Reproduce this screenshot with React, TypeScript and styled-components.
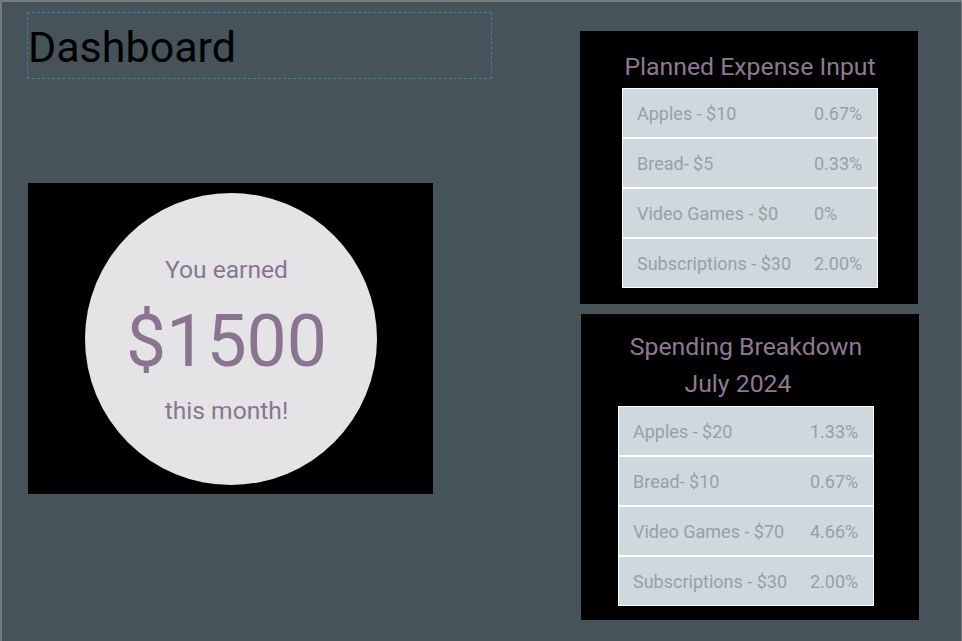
import React from "react";
import styled, { createGlobalStyle } from "styled-components";

const GlobalStyle = createGlobalStyle`
  html, body {
    margin: 0;
    padding: 0;
    background: #747c80;
    font-family: Roboto, "Liberation Sans", Arial, sans-serif;
  }
  #root {
    margin: 2px 1px 0 2px;
  }
`;

const Page = styled.div`
  min-height: calc(100vh - 2px);
  background: #465358;
  display: flex;
  align-items: flex-start;
  padding-left: 25px;
  box-sizing: border-box;
`;

const LeftColumn = styled.div`
  width: 465px;
  padding-top: 10px;
  display: flex;
  flex-direction: column;
`;

const RightColumn = styled.div`
  margin-left: 88px;
  padding-top: 29px;
  display: flex;
  flex-direction: column;
  gap: 10px;
`;

const TitleBox = styled.div`
  height: 67px;
  box-sizing: border-box;
  border: 1px dashed #3f7fa3;
  padding: 9px 0 0 0;
`;

const Title = styled.h1`
  margin: 0;
  font-size: 43px;
  font-weight: 400;
  line-height: normal;
  color: #000;
`;

const EarnedCard = styled.div`
  margin: 104px 0 0 1px;
  width: 405px;
  height: 311px;
  background: #000;
  display: flex;
  align-items: center;
  justify-content: center;
`;

const Circle = styled.div`
  width: 292px;
  height: 292px;
  border-radius: 50%;
  background: #e4e4e7;
  display: flex;
  flex-direction: column;
  align-items: center;
  justify-content: center;
  padding: 3px 8px 0 0;
  box-sizing: border-box;
  color: #8a7590;
`;

const EarnedLine = styled.div<{ $gap?: number }>`
  font-size: 24.6px;
  line-height: 28px;
  margin-top: ${(p) => p.$gap ?? 0}px;
`;

const Amount = styled.div`
  font-size: 71.5px;
  line-height: 82px;
  margin-top: 17px;
`;

const Card = styled.div<{ $top: number; $bottom: number; $nudge: number }>`
  width: 338px;
  box-sizing: border-box;
  background: #000;
  margin-left: ${(p) => p.$nudge}px;
  padding: ${(p) => p.$top}px 0 ${(p) => p.$bottom}px;
  display: flex;
  flex-direction: column;
`;

const CardInner = styled.div<{ $offset: number }>`
  width: 256px;
  margin-left: ${(p) => p.$offset}px;
  display: flex;
  flex-direction: column;
  align-items: center;
`;

const CardTitle = styled.h2<{ $gap: number }>`
  margin: 0 0 ${(p) => p.$gap}px;
  font-size: 24.8px;
  font-weight: 400;
  line-height: 37px;
  color: #8d7a91;
  text-align: center;
  white-space: nowrap;
`;

const TitleLine = styled.span<{ $pad?: number }>`
  display: block;
  padding-right: ${(p) => p.$pad ?? 0}px;
`;

const Table = styled.div`
  width: 256px;
  display: flex;
  flex-direction: column;
`;

const Row = styled.div`
  height: 50px;
  box-sizing: border-box;
  border: 1px solid #ffffff;
  background: #cfd8dc;
  display: grid;
  grid-template-columns: 1fr 50px;
  align-items: center;
  padding: 1px 13px 0 14px;
  font-size: 18px;
  color: #9a9fa4;
  white-space: nowrap;
`;

const Cell = styled.span``;

type Item = { label: string; pct: string };

const planned: Item[] = [
  { label: "Apples - $10", pct: "0.67%" },
  { label: "Bread- $5", pct: "0.33%" },
  { label: "Video Games - $0", pct: "0%" },
  { label: "Subscriptions - $30", pct: "2.00%" },
];

const spending: Item[] = [
  { label: "Apples - $20", pct: "1.33%" },
  { label: "Bread- $10", pct: "0.67%" },
  { label: "Video Games - $70", pct: "4.66%" },
  { label: "Subscriptions - $30", pct: "2.00%" },
];

const ItemTable = ({ items }: { items: Item[] }) => (
  <Table>
    {items.map((it) => (
      <Row key={it.label}>
        <Cell>{it.label}</Cell>
        <Cell>{it.pct}</Cell>
      </Row>
    ))}
  </Table>
);

export default function App() {
  return (
    <>
      <GlobalStyle />
      <Page>
        <LeftColumn>
          <TitleBox>
            <Title>Dashboard</Title>
          </TitleBox>
          <EarnedCard>
            <Circle>
              <EarnedLine>You earned</EarnedLine>
              <Amount>$1500</Amount>
              <EarnedLine $gap={14}>this month!</EarnedLine>
            </Circle>
          </EarnedCard>
        </LeftColumn>
        <RightColumn>
          <Card $top={17} $bottom={16} $nudge={0}>
            <CardInner $offset={42}>
              <CardTitle $gap={3}>Planned Expense Input</CardTitle>
              <ItemTable items={planned} />
            </CardInner>
          </Card>
          <Card $top={14} $bottom={14} $nudge={1}>
            <CardInner $offset={37}>
              <CardTitle $gap={4}>
                <TitleLine>Spending Breakdown</TitleLine>
                <TitleLine $pad={16}>July 2024</TitleLine>
              </CardTitle>
              <ItemTable items={spending} />
            </CardInner>
          </Card>
        </RightColumn>
      </Page>
    </>
  );
}
